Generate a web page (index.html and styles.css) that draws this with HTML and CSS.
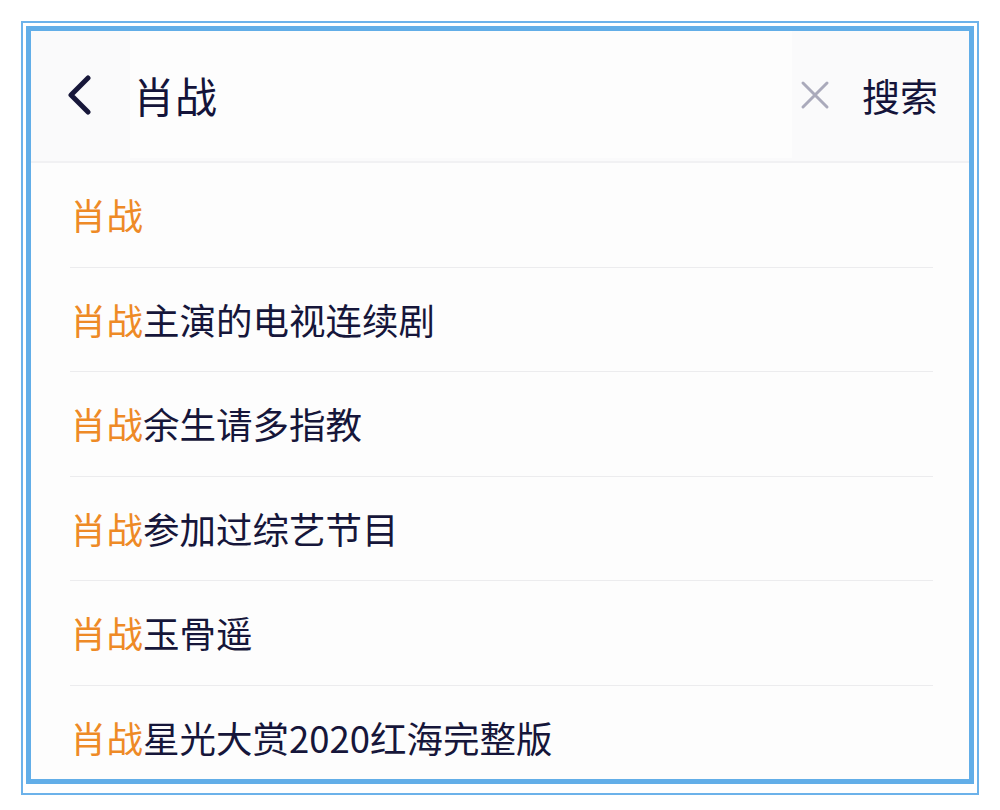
FILE: index.html
```html
<!DOCTYPE html>
<html lang="zh-CN">

<head>
  <meta charset="UTF-8">
  <meta name="viewport" content="width=device-width, initial-scale=1.0">
  <title>搜索</title>
  <link rel="stylesheet" href="styles.css">
</head>

<body>

  <div class="frame">
    <div class="screen">

      <div class="search-bar">
        <span class="btn-back">
          <svg width="26" height="40" viewBox="0 0 26 40">
            <polyline points="20,3 3,20 20,37" fill="none" stroke="#17173a" stroke-width="5" stroke-linecap="round" stroke-linejoin="round" />
          </svg>
        </span>
        <div class="search-input">肖战</div>
        <span class="btn-clear">
          <svg width="30" height="30" viewBox="0 0 30 30">
            <path d="M3 3 L27 27 M27 3 L3 27" stroke="#aaaabb" stroke-width="3" stroke-linecap="round" />
          </svg>
        </span>
        <span class="btn-search">搜索</span>
      </div>

      <ul class="suggest-list">
        <li class="suggest-item"><span class="hl">肖战</span></li>
        <li class="suggest-item"><span class="hl">肖战</span>主演的电视连续剧</li>
        <li class="suggest-item"><span class="hl">肖战</span>余生请多指教</li>
        <li class="suggest-item"><span class="hl">肖战</span>参加过综艺节目</li>
        <li class="suggest-item"><span class="hl">肖战</span>玉骨遥</li>
        <li class="suggest-item"><span class="hl">肖战</span>星光大赏2020红海完整版</li>
      </ul>

    </div>
  </div>

</body>

</html>
```

FILE: styles.css
```css
body {
  margin: 0;
  background: #ffffff;
  font-family: "Noto Sans CJK SC", "Noto Sans", sans-serif;
  color: #16163a;
}

.frame {
  margin: 21px;
  height: 764px;
  border: 2px solid #6cb2ea;
  padding: 3px;
}

.screen {
  height: 748px;
  border: 5px solid #62aee8;
  background: #fdfdfd;
  overflow: hidden;
}

.search-bar {
  display: flex;
  align-items: center;
  height: 127px;
  padding: 0 31px 3px 37px;
  background: #fafafb;
  border-bottom: 2px solid #f1f1f3;
}

.btn-back {
  display: flex;
  width: 26px;
}

.search-input {
  flex: 1;
  align-self: stretch;
  display: flex;
  align-items: center;
  margin: 0 8px 0 36px;
  padding-left: 3px;
  background: #fdfdfd;
  font-size: 42px;
  color: #14143a;
}

.btn-clear {
  display: flex;
  margin-right: 32px;
}

.btn-search {
  font-size: 38px;
  color: #14143a;
}

.suggest-list {
  list-style: none;
  margin: 0 36px 0 39px;
  padding: 0;
}

.suggest-item {
  height: 103.5px;
  display: flex;
  align-items: center;
  border-bottom: 1px solid #ececee;
  font-size: 36.5px;
  color: #16163a;
}

.hl {
  color: #ee8a26;
}
```
